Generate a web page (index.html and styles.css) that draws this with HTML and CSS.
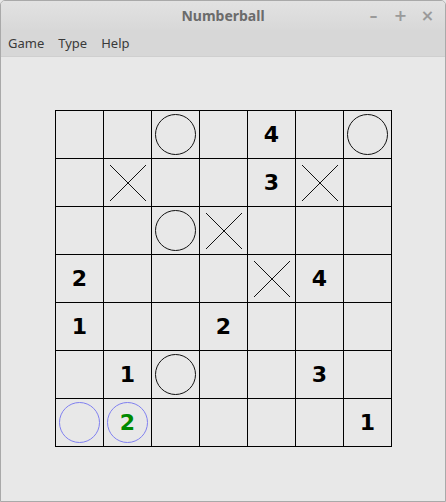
FILE: index.html
```html
<!DOCTYPE html>
<html>
<head>
<meta charset="utf-8">
<title>Numberball</title>
<link rel="stylesheet" href="styles.css">
</head>
<body>
<div class="window">
  <div class="titlebar">
    <span class="title">Numberball</span>
    <div class="controls">
      <span class="ctl">&#8211;</span>
      <span class="ctl">+</span>
      <span class="ctl close">&#215;</span>
    </div>
  </div>
  <div class="menubar">
    <span class="menu">Game</span>
    <span class="menu">Type</span>
    <span class="menu">Help</span>
  </div>
  <div class="content">
    <div class="board">
      <!-- row 1 -->
      <div class="cell"></div>
      <div class="cell"></div>
      <div class="cell"><svg class="ico" viewBox="0 0 47 47"><circle cx="23.5" cy="23.5" r="20" class="o"/></svg></div>
      <div class="cell"></div>
      <div class="cell num">4</div>
      <div class="cell"></div>
      <div class="cell"><svg class="ico" viewBox="0 0 47 47"><circle cx="23.5" cy="23.5" r="20" class="o"/></svg></div>
      <!-- row 2 -->
      <div class="cell"></div>
      <div class="cell"><svg class="ico" viewBox="0 0 47 47"><path class="x" d="M6 6L42 42M42 6L6 42"/></svg></div>
      <div class="cell"></div>
      <div class="cell"></div>
      <div class="cell num">3</div>
      <div class="cell"><svg class="ico" viewBox="0 0 47 47"><path class="x" d="M6 6L42 42M42 6L6 42"/></svg></div>
      <div class="cell"></div>
      <!-- row 3 -->
      <div class="cell"></div>
      <div class="cell"></div>
      <div class="cell"><svg class="ico" viewBox="0 0 47 47"><circle cx="23.5" cy="23.5" r="20" class="o"/></svg></div>
      <div class="cell"><svg class="ico" viewBox="0 0 47 47"><path class="x" d="M6 6L42 42M42 6L6 42"/></svg></div>
      <div class="cell"></div>
      <div class="cell"></div>
      <div class="cell"></div>
      <!-- row 4 -->
      <div class="cell num">2</div>
      <div class="cell"></div>
      <div class="cell"></div>
      <div class="cell"></div>
      <div class="cell"><svg class="ico" viewBox="0 0 47 47"><path class="x" d="M6 6L42 42M42 6L6 42"/></svg></div>
      <div class="cell num">4</div>
      <div class="cell"></div>
      <!-- row 5 -->
      <div class="cell num">1</div>
      <div class="cell"></div>
      <div class="cell"></div>
      <div class="cell num">2</div>
      <div class="cell"></div>
      <div class="cell"></div>
      <div class="cell"></div>
      <!-- row 6 -->
      <div class="cell"></div>
      <div class="cell num">1</div>
      <div class="cell"><svg class="ico" viewBox="0 0 47 47"><circle cx="23.5" cy="23.5" r="20" class="o"/></svg></div>
      <div class="cell"></div>
      <div class="cell"></div>
      <div class="cell num">3</div>
      <div class="cell"></div>
      <!-- row 7 -->
      <div class="cell"><svg class="ico" viewBox="0 0 47 47"><circle cx="23.5" cy="23.5" r="20" class="sel"/></svg></div>
      <div class="cell num green"><svg class="ico" viewBox="0 0 47 47"><circle cx="23.5" cy="23.5" r="20" class="sel"/></svg><span class="lbl">2</span></div>
      <div class="cell"></div>
      <div class="cell"></div>
      <div class="cell"></div>
      <div class="cell"></div>
      <div class="cell num">1</div>
    </div>
  </div>
</div>
</body>
</html>
```

FILE: styles.css
```css
html, body {
  margin: 0;
  padding: 0;
  width: 446px;
  height: 502px;
  overflow: hidden;
  background: #e8e8e8;
}

.window {
  box-sizing: border-box;
  width: 446px;
  height: 502px;
  border: 1px solid #a9a9a9;
  border-radius: 5px 5px 0 0;
  background: #e8e8e8;
  display: flex;
  flex-direction: column;
  font-family: "Noto Sans", "DejaVu Sans", sans-serif;
  overflow: hidden;
}

.titlebar {
  height: 29px;
  flex: none;
  display: flex;
  align-items: center;
  justify-content: center;
  position: relative;
  background: linear-gradient(#e2e2e2, #d8d8d8);
}

.title {
  font-weight: bold;
  font-size: 14px;
  color: #6b6b6b;
  margin-bottom: 1px;
}

.controls {
  position: absolute;
  right: 10px;
  top: 0;
  height: 29px;
  display: flex;
  align-items: center;
  gap: 12px;
}

.ctl {
  width: 15px;
  text-align: center;
  font-size: 16px;
  font-weight: bold;
  color: #9a9a9a;
  font-family: "DejaVu Sans", sans-serif;
}

.menubar {
  height: 26px;
  flex: none;
  display: flex;
  align-items: center;
  padding-left: 7px;
  gap: 14px;
  background: #d7d7d7;
  border-bottom: 1px solid #cfcfcf;
}

.menu {
  font-size: 13px;
  color: #3a3a3a;
}

.content {
  flex: 1;
  padding-top: 53px;
  padding-left: 54px;
}

.board {
  display: grid;
  grid-template-columns: repeat(7, 47px);
  grid-template-rows: repeat(7, 47px);
  gap: 1px;
  padding: 1px;
  background: #000;
  width: max-content;
}

.cell {
  background: #e8e8e8;
  position: relative;
  display: flex;
  align-items: center;
  justify-content: center;
}

.num {
  font-family: "DejaVu Sans", sans-serif;
  font-weight: bold;
  font-size: 22px;
  color: #000;
}

.green {
  color: #008a00;
}

.ico {
  width: 47px;
  height: 47px;
  display: block;
}

.lbl {
  position: absolute;
  inset: 0;
  display: flex;
  align-items: center;
  justify-content: center;
}

.o {
  fill: none;
  stroke: #111;
  stroke-width: 1;
}

.sel {
  fill: none;
  stroke: #8080f0;
  stroke-width: 1;
}

.x {
  fill: none;
  stroke: #111;
  stroke-width: 1;
}
```
